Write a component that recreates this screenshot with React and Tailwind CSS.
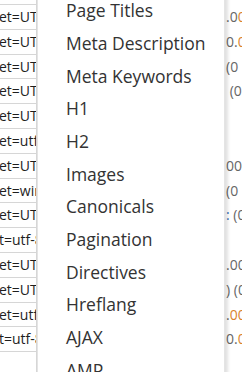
import React from "react";

const leftRows = [
  "et=UTF-8",
  "et=UTF-8",
  "et=UTF-8",
  "et=UTF-8",
  "et=UTF-8",
  "et=utf-8",
  "et=UTF-8",
  "et=windows",
  "et=UTF-8",
  "t=utf-8",
  "et=UTF-8",
  "et=UTF-8",
  "et=utf-8",
  "t=utf-8",
];

const rightRows = [
  [["text-[#666]", ".0"], ["text-[#d9822b]", "0"]],
  [["text-[#666]", "0."], ["text-[#d9822b]", "0"]],
  [["text-[#666]", "(0"]],
  [["text-[#666]", " (0"]],
  [],
  [],
  [["text-[#666]", "00%"]],
  [["text-[#666]", "(0"]],
  [["text-[#3b6fb6]", ":"], ["text-[#666]", " (0"]],
  [],
  [["text-[#666]", ".00"]],
  [["text-[#666]", ") (0"]],
  [["text-[#666]", "."], ["text-[#d9822b]", "00"]],
  [["text-[#666]", "0."], ["text-[#d9822b]", "0"]],
];

const items = [
  "Page Titles",
  "Meta Description",
  "Meta Keywords",
  "H1",
  "H2",
  "Images",
  "Canonicals",
  "Pagination",
  "Directives",
  "Hreflang",
  "AJAX",
  "AMP",
];

export default function App() {
  return (
    <div
      className="relative w-[242px] h-[372px] overflow-hidden bg-white"
      style={{ fontFamily: '"Open Sans", "Noto Sans", sans-serif' }}
    >
      <div className="flex h-full">
        <div className="w-[37px] shrink-0 flex flex-col border-r border-[#d6d6d6]">
          <div className="h-[5px] shrink-0 border-b border-[#d6d6d6]" />
          {leftRows.map((t, i) => (
            <div
              key={i}
              className="h-[24.8px] shrink-0 border-b border-[#d6d6d6] overflow-hidden whitespace-nowrap text-[14px] leading-[24px] text-[#1e1e1e] -indent-[1px]"
            >
              {t}
            </div>
          ))}
        </div>
        <div className="flex-1" />
        <div className="w-[18px] shrink-0 flex flex-col">
          <div className="h-[5px] shrink-0" />
          {rightRows.map((parts, i) => (
            <div
              key={i}
              className="h-[24.8px] shrink-0 overflow-hidden whitespace-pre text-[14px] leading-[24px] pl-[2px]"
            >
              {parts.map(([c, t], j) => (
                <span key={j} className={c}>
                  {t}
                </span>
              ))}
            </div>
          ))}
        </div>
      </div>

      <div className="absolute left-[37px] top-[-6px] w-[188px] bg-white border-l border-[#e4e4e4] border-r border-[#bdbdbd] shadow-[3px_0_3px_rgba(0,0,0,0.12)] flex flex-col">
        {items.map((t) => (
          <div
            key={t}
            className="h-[32.7px] flex items-center pl-[28px] text-[17.5px] text-[#333] whitespace-nowrap"
          >
            {t}
          </div>
        ))}
      </div>
    </div>
  );
}
